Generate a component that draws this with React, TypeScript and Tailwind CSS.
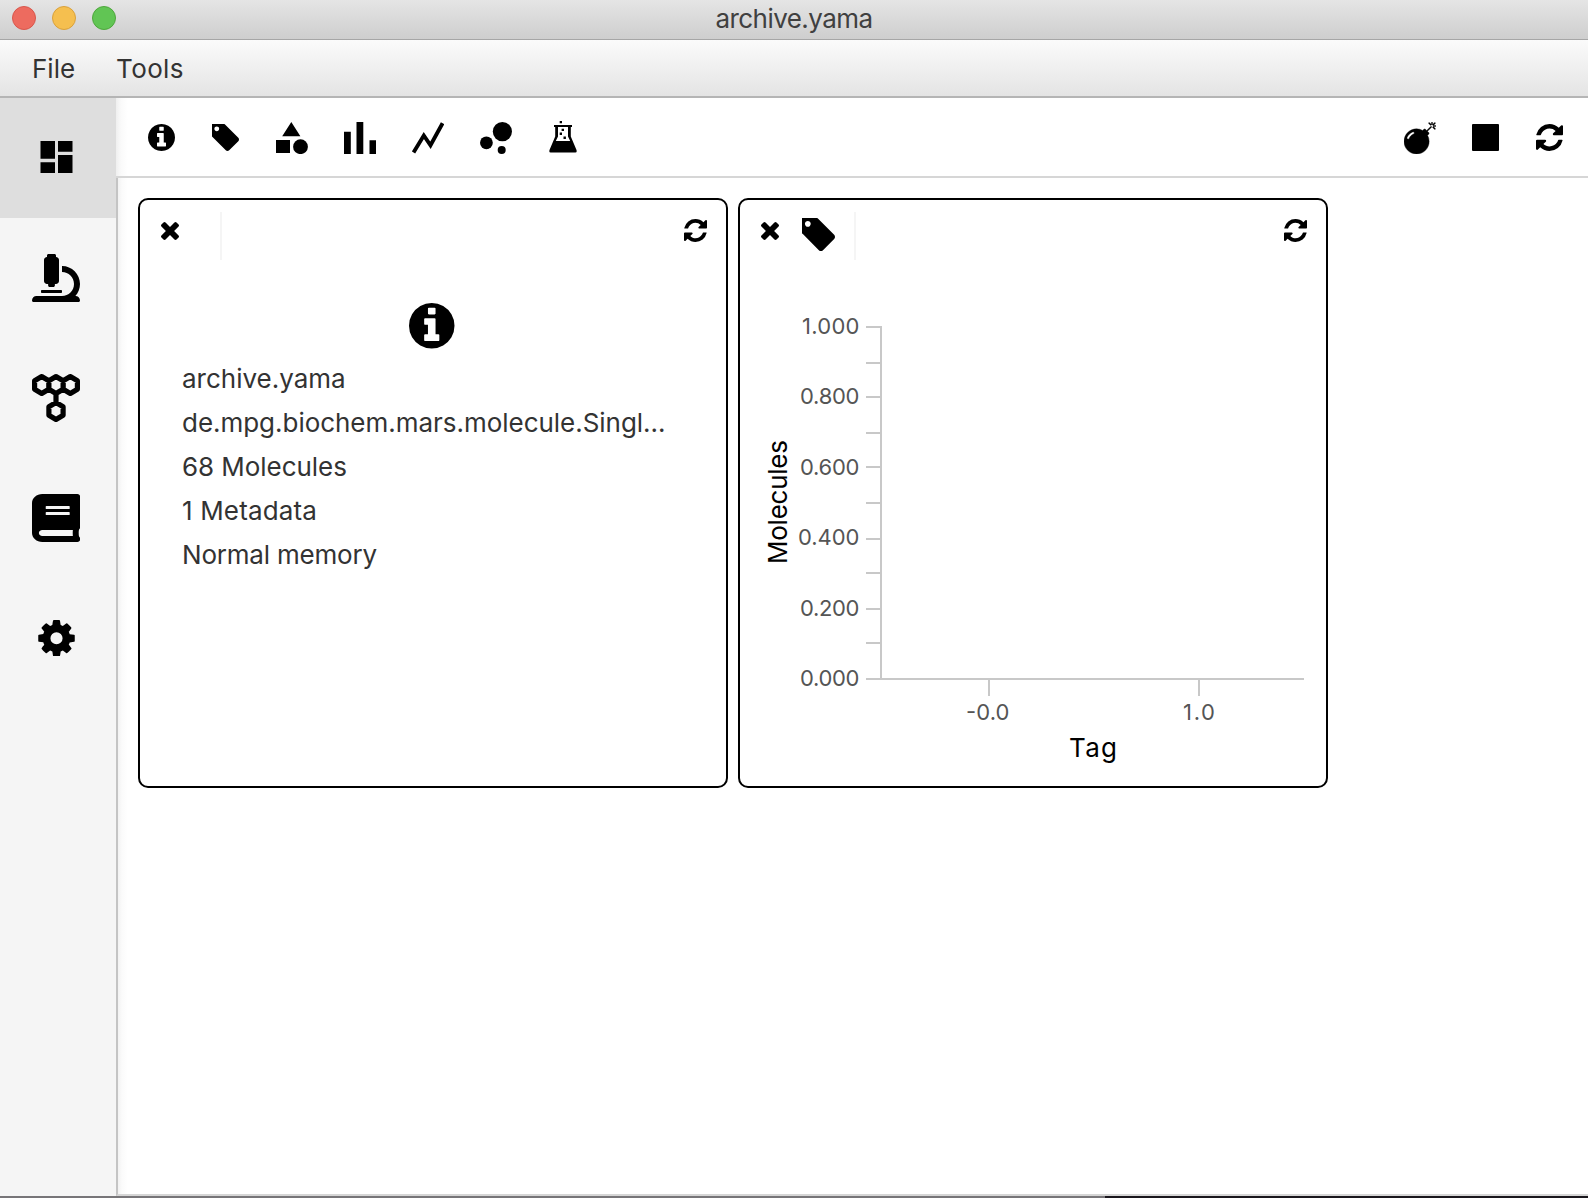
import type { ReactNode } from "react";
import { FaBook, FaMicroscope } from "react-icons/fa";

const INFO =
  "M1152 1376v-160q0-14-9-23t-23-9h-96v-512q0-14-9-23t-23-9h-320q-14 0-23 9t-9 23v160q0 14 9 23t23 9h96v320h-96q-14 0-23 9t-9 23v160q0 14 9 23t23 9h448q14 0 23-9t9-23zm-128-896v-160q0-14-9-23t-23-9h-192q-14 0-23 9t-9 23v160q0 14 9 23t23 9h192q14 0 23-9t9-23zm640 416q0 209-103 385.5t-279.5 279.5-385.5 103-385.5-103-279.5-279.5-103-385.5 103-385.5 279.5-279.5 385.5-103 385.5 103 279.5 279.5 103 385.5z";
const TAG =
  "M576 448q0-53-37.5-90.5t-90.5-37.5-90.5 37.5-37.5 90.5 37.5 90.5 90.5 37.5 90.5-37.5 37.5-90.5zm1067 576q0 53-37 90l-491 492q-39 37-91 37-53 0-90-37l-715-716q-38-37-64.5-101t-26.5-117v-416q0-52 38-90t90-38h416q53 0 117 26.5t102 64.5l715 714q37 39 37 91z";
const REFRESH =
  "M1639 1056q0 5-1 7-64 268-268 434.5t-478 166.5q-146 0-282.5-55t-243.5-157l-129 129q-19 19-45 19t-45-19-19-45v-448q0-26 19-45t45-19h448q26 0 45 19t19 45-19 45l-137 137q71 66 161 102t187 36q134 0 250-65t186-179q11-17 53-117 8-23 30-23h192q13 0 22.5 9.5t9.5 22.5zm25-800v448q0 26-19 45t-45 19h-448q-26 0-45-19t-19-45 19-45l138-138q-148-137-349-137-134 0-250 65t-186 179q-11 17-53 117-8 23-30 23h-199q-13 0-22.5-9.5t-9.5-22.5v-7q65-268 270-434.5t480-166.5q146 0 284 55.5t245 156.5l130-129q19-19 45-19t45 19 19 45z";
const CLOSE =
  "M1490 1322q0 40-28 68l-136 136q-28 28-68 28t-68-28l-294-294-294 294q-28 28-68 28t-68-28l-136-136q-28-28-28-68t28-68l294-294-294-294q-28-28-28-68t28-68l136-136q28-28 68-28t68 28l294 294 294-294q28-28 68-28t68 28l136 136q28 28 28 68t-28 68l-294 294 294 294q28 28 28 68z";
const COG =
  "M1152 896q0-106-75-181t-181-75-181 75-75 181 75 181 181 75 181-75 75-181zm512-109v222q0 12-8 23t-20 13l-185 28q-19 54-39 91 35 50 107 138 10 12 10 25t-9 23q-27 37-99 108t-94 71q-12 0-26-9l-138-108q-44 23-91 38-16 136-29 186-7 28-36 28h-222q-14 0-24.5-8.5t-11.5-21.5l-28-184q-49-16-90-37l-141 107q-10 9-25 9-14 0-25-11-126-114-165-168-7-10-7-23 0-12 8-23 15-21 51-66.5t54-70.5q-27-50-41-99l-183-27q-13-2-21-12.5t-8-23.5v-222q0-12 8-23t19-13l186-28q14-46 39-92-40-57-107-138-10-12-10-24 0-10 9-23 26-36 98.5-107.5t94.5-71.5q13 0 26 10l138 107q44-23 91-38 16-136 29-186 7-28 36-28h222q14 0 24.5 8.5t11.5 21.5l28 184q49 16 90 37l142-107q9-9 24-9 13 0 25 10 129 119 165 170 7 8 7 22 0 12-8 23-15 21-51 66.5t-54 70.5q26 50 41 98l183 28q13 2 21 12.5t8 23.5z";
const BOMB =
  "M571 589q-10-25-34-35t-49 0q-108 44-191 127t-127 191q-10 25 0 49t35 34q13 5 24 5 42 0 60-40 34-84 98.5-148.5t148.5-98.5q25-11 35-35t0-49zm942-356l46 46-244 243 68 68q19 19 19 45.5t-19 45.5l-64 64q89 161 89 343 0 143-55.5 273.5t-150 225-225 150-273.5 55.5-273.5-55.5-225-150-150-225-55.5-273.5 55.5-273.5 150-225 225-150 273.5-55.5q182 0 343 89l64-64q19-19 45.5-19t45.5 19l68 68zm8-56q-10 10-22 10-13 0-23-10l-91-90q-9-10-9-23t9-23q10-9 23-9t23 9l90 91q10 9 10 22.5t-10 22.5zm230 230q-11 9-23 9t-23-9l-90-91q-10-9-10-22.5t10-22.5q9-10 22.5-10t22.5 10l91 90q9 10 9 23t-9 23zm41-183q0 14-9 23t-23 9h-96q-14 0-23-9t-9-23 9-23 23-9h96q14 0 23 9t9 23zm-192-192v96q0 14-9 23t-23 9-23-9-9-23v-96q0-14 9-23t23-9 23 9 9 23zm151 55l-91 90q-10 10-22 10-13 0-23-10-10-9-10-22.5t10-22.5l90-91q10-9 23-9t23 9q9 10 9 23t-9 23z";

function Glyph({ d, box, className }: { d: string; box: string; className: string }) {
  return (
    <svg viewBox={box} className={className} fill="black">
      <path d={d} />
    </svg>
  );
}

const InfoIcon = ({ className }: { className: string }) => <Glyph d={INFO} box="128 128 1536 1536" className={className} />;
const TagIcon = ({ className }: { className: string }) => <Glyph d={TAG} box="192 192 1451 1451" className={className} />;
const RefreshIcon = ({ className }: { className: string }) => <Glyph d={REFRESH} box="128 128 1536 1536" className={className} />;
const CloseIcon = ({ className }: { className: string }) => <Glyph d={CLOSE} box="302 366 1188 1188" className={className} />;

function Dashboard() {
  return (
    <svg viewBox="0 0 32.5 32" className="mr-[3px] mb-[2px] h-[32px] w-[32.500px]">
      <path d="M.5 0h14.500v17.700H.5zM.5 21.300h14.500V32H.5zM18 14h14.500v18H18zM18 0h14.500v10.700H18z" />
    </svg>
  );
}

function Hexagons() {
  const hex = (x: number, y: number) =>
    `M${x} ${y - 8.4}l7.100 4.2v8.4l-7.100 4.2l-7.100-4.2v-8.4z`;
  return (
    <svg viewBox="0 0 48 48" className="mr-[4px] size-[48px]" fill="none" stroke="black" strokeWidth="5.200" strokeLinejoin="round">
      <path d={hex(9.7, 11) + hex(24, 11) + hex(38.3, 11) + hex(24, 37) + "M24 19V29"} />
    </svg>
  );
}

function Category() {
  return (
    <svg viewBox="0 0 32 32" className="size-[32px]">
      <path d="M15.3 0L24.4 14.2H6.2zM0 18h14v13H0z" />
      <circle cx="24.5" cy="24.7" r="7.4" />
    </svg>
  );
}

function Bars() {
  return (
    <svg viewBox="0 0 32 32" className="size-[32px]">
      <path d="M0 9.7h6.8V32H0zM12.5 0h6.8v32h-6.8zM25.5 18.3H32V32h-6.500z" />
    </svg>
  );
}

function Line() {
  return (
    <svg viewBox="0 0 32 32" className="size-[32px]" fill="none" stroke="black" strokeWidth="3.900">
      <path d="M1.500 30.500L11.800 13.500L18.500 23.300L30.600 1.300" />
    </svg>
  );
}

function Bubbles() {
  return (
    <svg viewBox="0 0 32 32" className="size-[32px]">
      <circle cx="22.4" cy="9.600" r="9.600" />
      <circle cx="6.400" cy="20.800" r="6.400" />
      <circle cx="21.700" cy="28" r="4" />
    </svg>
  );
}

function Flask() {
  return (
    <svg viewBox="0 0 28 32" className="mb-[3px] ml-[1px] h-[32px] w-[28px]">
      <path d="M5 4h18v2H5zM6.200 6h2.800v9.500L6.800 20h14.400L19 15.500V6h2.800v9.500L27.500 29Q28.200 31.600 26.400 31.600H1.600Q-.2 31.600.5 29L6.200 15.500z" />
      <path d="M10.700 0h2.300v2.300h-2.300zM12.600 7.700h2.400v2.400h-2.400zM10.700 11.600h2.300v2.300h-2.300zM14.500 15.500h2.400v2.400h-2.400z" />
    </svg>
  );
}

function SideItem({ active, children }: { active?: boolean; children: ReactNode }) {
  return (
    <div className={`flex h-[120px] items-center justify-center ${active ? "bg-[#dedede]" : ""}`}>{children}</div>
  );
}

function Card({ icon, children }: { icon?: ReactNode; children: ReactNode }) {
  return (
    <section className="flex h-[590px] w-[590px] flex-col rounded-[10px] border-2 border-black bg-white">
      <header className="flex h-[60px] items-start pr-[19.500px] pl-[21px]">
        <CloseIcon className="mt-[22px] size-[18px]" />
        {icon}
        <span className={`mt-[12px] h-[48px] w-[2px] bg-[#f5f5f5] ${icon ? "ml-[19px]" : "ml-[41px]"}`} />
        <RefreshIcon className="mt-[19px] ml-auto size-[23px]" />
      </header>
      {children}
    </section>
  );
}

function TagChart() {
  const majors = [
    { y: 327, label: "1.000", w: 57.5 },
    { y: 397, label: "0.800", w: 59.5 },
    { y: 467, label: "0.600", w: 59.5 },
    { y: 539, label: "0.400", w: 61.5 },
    { y: 609, label: "0.200", w: 59.5 },
    { y: 679, label: "0.000", w: 59.5 },
  ];
  const minors = [363, 433, 503, 573, 643];
  return (
    <svg viewBox="740 260 586 526" className="h-[526px] w-[586px] font-[Inter,sans-serif]">
      <g stroke="#c8c8c8" strokeWidth="2" fill="none">
        <path d="M881 326V679M866 679H1304M989 680V696M1199 680V696" />
        {[...majors.map((m) => m.y), ...minors].map((y) => (
          <path key={y} d={`M866 ${y}H881`} />
        ))}
      </g>
      <g fill="#555555" fontSize="22">
        {majors.map((m) => (
          <text key={m.label} x={859.5 - m.w} y={m.y === 539 ? 545 : m.y === 467 ? 475 : m.y + 7} textLength={m.w}>
            {m.label}
          </text>
        ))}
        <text x="966" y="720" textLength="43.500">-0.0</text>
        <text x="1183" y="720" textLength="32">1.0</text>
      </g>
      <g fill="black" fontSize="26">
        <text x="1069" y="757" textLength="48">Tag</text>
        <text transform="translate(787 564) rotate(-90)" textLength="124">Molecules</text>
      </g>
    </svg>
  );
}

export default function App() {
  return (
    <div className="flex h-[1198px] w-[1588px] flex-col overflow-hidden bg-white font-[Inter,sans-serif] text-[26px] text-[#333333]">
      <div className="relative flex h-[40px] shrink-0 items-center justify-center border-b border-[#a6a6a6] bg-gradient-to-b from-[#e5e5e5] to-[#cecece] pb-[3px]">
        <div className="absolute top-[6px] left-[12px] flex gap-[16px]">
          <i className="size-[24px] rounded-full border border-[#d8574c] bg-[#ed6b5f]" />
          <i className="size-[24px] rounded-full border border-[#d9a13c] bg-[#f5bf4f]" />
          <i className="size-[24px] rounded-full border border-[#4ea73c] bg-[#61c554]" />
        </div>
        <span className="tracking-[-0.550px] text-[#404040]">archive.yama</span>
      </div>
      <nav className="flex h-[58px] shrink-0 items-center gap-[41px] border-b-2 border-[#b5b5b5] bg-gradient-to-b from-[#fbfbfb] to-[#e4e4e4] pt-px pl-[32px]">
        <span>File</span>
        <span className="tracking-[0.350px]">Tools</span>
      </nav>
      <div className="flex min-h-0 flex-1">
        <aside className="w-[116px] shrink-0 bg-[#f5f5f5]">
          <SideItem active>
            <Dashboard />
          </SideItem>
          <SideItem>
            <FaMicroscope className="mr-[4px] size-[48px] text-black" />
          </SideItem>
          <SideItem>
            <Hexagons />
          </SideItem>
          <SideItem>
            <FaBook preserveAspectRatio="none" className="mr-[4px] size-[48px] text-black" />
          </SideItem>
          <SideItem>
            <Glyph d={COG} box="128 128 1536 1536" className="mr-[3px] h-[36.500px] w-[37px]" />
          </SideItem>
        </aside>
        <main className="flex flex-1 flex-col">
          <div className="flex h-[80px] shrink-0 items-center border-b-2 border-[#d6d6d6] bg-[linear-gradient(to_right,#efefef,#fafafa_5px,#ffffff_12px)] pt-px pr-[25px] pl-[32px]">
            <div className="flex items-center">
              <InfoIcon className="mr-[37px] size-[27px]" />
              <TagIcon className="mr-[37px] size-[27px]" />
              <div className="flex items-center gap-[36px] pt-[1px]">
                <Category />
                <Bars />
                <Line />
                <Bubbles />
                <Flask />
              </div>
            </div>
            <div className="ml-auto flex items-center">
              <svg viewBox="0 0 1792 1792" className="mr-[36.500px] size-[32px]" stroke="black" strokeWidth="22">
                <path d={BOMB} />
              </svg>
              <span className="mr-[37px] size-[27px] rounded-[1px] bg-black" />
              <RefreshIcon className="size-[27px]" />
            </div>
          </div>
          <div className="flex flex-1 items-start gap-[10px] border-b-2 border-l-2 border-b-[#d6d6d6] border-l-[#c4c4c4] bg-[linear-gradient(to_right,#f2f2f2,#fbfbfb_4px,#ffffff_10px)] pt-[20px] pl-[20px]">
            <Card>
              <div className="flex flex-col pt-[43px] pl-[42px]">
                <InfoIcon className="ml-[227px] size-[45.500px]" />
                <div className="mt-[8.500px] flex flex-col leading-[44px] whitespace-nowrap">
                  <span>archive.yama</span>
                  <span className="tracking-[-0.030px]">de.mpg.biochem.mars.molecule.Singl...</span>
                  <span className="tracking-[-0.050px]">68 Molecules</span>
                  <span className="tracking-[0.150px]">1 Metadata</span>
                  <span className="tracking-[-0.200px]">Normal memory</span>
                </div>
              </div>
            </Card>
            <Card icon={<TagIcon className="mt-[18px] ml-[23px] size-[33px]" />}>
              <TagChart />
            </Card>
          </div>
        </main>
      </div>
      <footer className="flex h-[2px] shrink-0 bg-[#1a171d]">
        <span className="w-[1105px] bg-[#777578]" />
      </footer>
    </div>
  );
}
